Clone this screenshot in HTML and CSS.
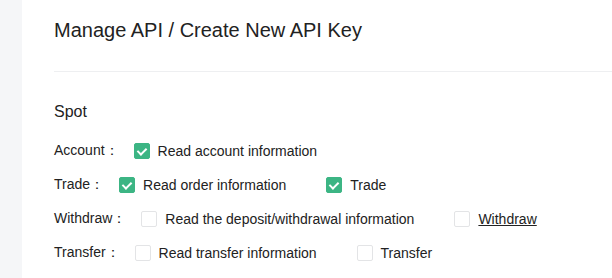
FILE: index.html
```html
<!DOCTYPE html>
<html lang="en">
  <head>
    <meta charset="UTF-8" />
    <title>Create New API Key</title>
    <link rel="stylesheet" href="styles.css">
  </head>
  <body>
    <aside class="sidebar"></aside>

    <main class="content">
      <h1 class="page-title">Manage API / Create New API Key</h1>

      <section class="permissions">
        <h2>Spot</h2>

        <div class="perm-row">
          <span class="perm-label">Account：</span>
          <label class="check"><span class="box checked"></span>Read account information</label>
        </div>

        <div class="perm-row">
          <span class="perm-label">Trade：</span>
          <label class="check"><span class="box checked"></span>Read order information</label>
          <label class="check"><span class="box checked"></span>Trade</label>
        </div>

        <div class="perm-row">
          <span class="perm-label">Withdraw：</span>
          <label class="check"><span class="box"></span>Read the deposit/withdrawal information</label>
          <label class="check"><span class="box"></span><u>Withdraw</u></label>
        </div>

        <div class="perm-row">
          <span class="perm-label">Transfer：</span>
          <label class="check"><span class="box"></span>Read transfer information</label>
          <label class="check"><span class="box"></span>Transfer</label>
        </div>
      </section>
    </main>
  </body>
</html>
```

FILE: styles.css
```css
body {
  font-family: "Liberation Sans", Arial, sans-serif;
  margin: 0;
  padding: 0;
  display: flex;
  min-height: 278px;
  background-color: #fff;
  color: #222;
}

.sidebar {
  width: 22px;
  flex-shrink: 0;
  background-color: #f5f6f8;
}

.content {
  flex: 1;
  padding: 0 0 0 32px;
}

.page-title {
  font-size: 20px;
  font-weight: normal;
  margin: 0;
  padding: 16px 0 27px;
  border-bottom: 1px solid #eeeff1;
  line-height: 28px;
}

.permissions h2 {
  font-size: 16px;
  font-weight: normal;
  margin: 30px 0 12px;
  line-height: 20px;
}

.perm-row {
  display: flex;
  align-items: center;
  font-size: 14px;
  height: 34px;
}

.perm-label {
  margin-right: 15px;
}

.check {
  display: flex;
  align-items: center;
  margin-right: 40px;
}

.box {
  width: 14px;
  height: 14px;
  border: 1px solid #e3e4e6;
  border-radius: 2px;
  margin-right: 8px;
  position: relative;
}

.box.checked {
  background-color: #3cb584;
  border-color: #3cb584;
}

.box.checked::after {
  content: "";
  position: absolute;
  left: 4px;
  top: 2px;
  width: 4px;
  height: 7px;
  border: solid #fff;
  border-width: 0 2px 2px 0;
  transform: rotate(45deg);
}
```
